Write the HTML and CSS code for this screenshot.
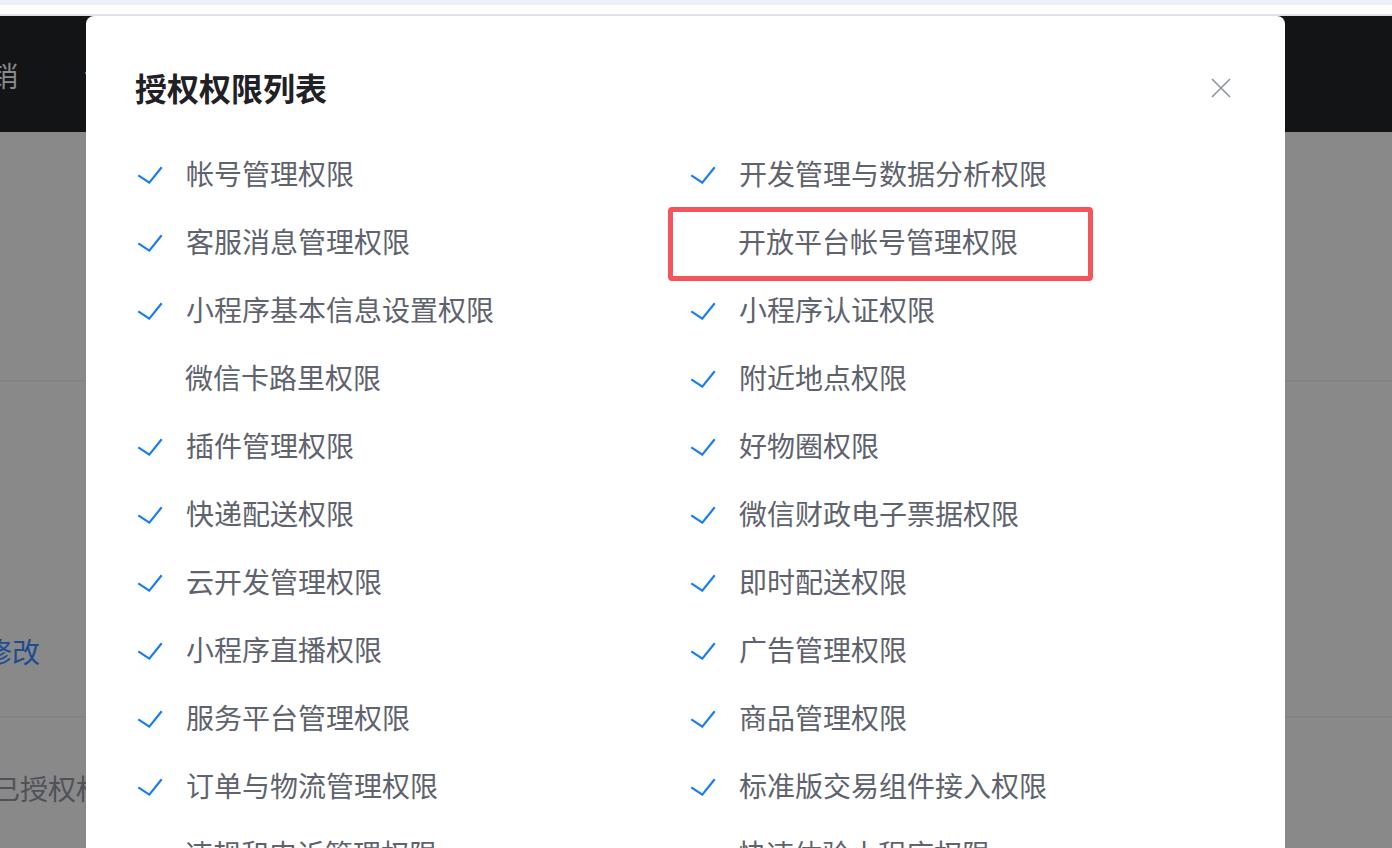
FILE: index.html
```html
<!DOCTYPE html>
<html lang="zh-CN">
<head>
<meta charset="utf-8">
<title>授权权限列表</title>
<link rel="stylesheet" href="styles.css">
</head>
<body>
<div class="page">
  <div class="topstrip"></div>
  <div class="topwhite"></div>
  <header class="navbar">
    <span class="nav-item">营销</span>
    <span class="nav-item">设置</span>
  </header>
  <section class="bg-content">
    <div class="bg-row bg-row-a"></div>
    <div class="bg-row bg-row-b"><span class="bg-link">修改</span></div>
    <div class="bg-row bg-row-c"><span class="bg-label">已授权权限</span></div>
  </section>

  <div class="modal">
    <div class="modal-head">
      <h2 class="modal-title">授权权限列表</h2>
      <button class="modal-close" aria-label="关闭">
        <svg width="22" height="22" viewBox="0 0 22 22"><path d="M2 2 L20 20 M20 2 L2 20" stroke="#8f949c" stroke-width="1.6" fill="none"/></svg>
      </button>
    </div>
    <ul class="perm-list">
      <li class="perm on"><span class="chk"></span>帐号管理权限</li>
      <li class="perm on"><span class="chk"></span>开发管理与数据分析权限</li>
      <li class="perm on"><span class="chk"></span>客服消息管理权限</li>
      <li class="perm off"><span class="chk"></span>开放平台帐号管理权限<span class="mark"></span></li>
      <li class="perm on"><span class="chk"></span>小程序基本信息设置权限</li>
      <li class="perm on"><span class="chk"></span>小程序认证权限</li>
      <li class="perm off"><span class="chk"></span>微信卡路里权限</li>
      <li class="perm on"><span class="chk"></span>附近地点权限</li>
      <li class="perm on"><span class="chk"></span>插件管理权限</li>
      <li class="perm on"><span class="chk"></span>好物圈权限</li>
      <li class="perm on"><span class="chk"></span>快递配送权限</li>
      <li class="perm on"><span class="chk"></span>微信财政电子票据权限</li>
      <li class="perm on"><span class="chk"></span>云开发管理权限</li>
      <li class="perm on"><span class="chk"></span>即时配送权限</li>
      <li class="perm on"><span class="chk"></span>小程序直播权限</li>
      <li class="perm on"><span class="chk"></span>广告管理权限</li>
      <li class="perm on"><span class="chk"></span>服务平台管理权限</li>
      <li class="perm on"><span class="chk"></span>商品管理权限</li>
      <li class="perm on"><span class="chk"></span>订单与物流管理权限</li>
      <li class="perm on"><span class="chk"></span>标准版交易组件接入权限</li>
      <li class="perm off"><span class="chk"></span>违规和申诉管理权限</li>
      <li class="perm off"><span class="chk"></span>快速体验小程序权限</li>
    </ul>
  </div>
</div>
</body>
</html>
```

FILE: styles.css
```css
html, body {
  margin: 0;
  padding: 0;
  width: 1392px;
  height: 848px;
  overflow: hidden;
  font-family: "Noto Sans CJK SC", "Noto Sans", sans-serif;
}

.page {
  position: relative;
  width: 1392px;
  height: 848px;
  background: #898989;
  overflow: hidden;
}

.topstrip {
  height: 5px;
  background: #eef1f8;
}

.topwhite {
  height: 9px;
  background: #ffffff;
  border-bottom: 2px solid #e2e2e2;
}

.navbar {
  height: 116px;
  background: #131416;
  display: flex;
  align-items: center;
  margin-left: -38px;
  gap: 66px;
}

.nav-item {
  font-size: 28px;
  color: #8a8b8e;
  line-height: 40px;
  margin-top: 2px;
}

.bg-content {
  display: flex;
  flex-direction: column;
}

.bg-row-a {
  height: 248px;
  border-bottom: 2px solid #838383;
}

.bg-row-b {
  height: 334px;
  border-bottom: 2px solid #838383;
  display: flex;
  align-items: flex-end;
  margin-left: -16px;
}

.bg-link {
  font-size: 28px;
  color: #1d4c92;
  line-height: 40px;
  margin-bottom: 45px;
}

.bg-row-c {
  height: 130px;
  margin-left: -8px;
}

.bg-label {
  display: block;
  font-size: 28px;
  color: #505257;
  line-height: 40px;
  margin-top: 50px;
}

.modal {
  position: absolute;
  left: 86px;
  top: 16px;
  width: 1199px;
  height: 900px;
  background: #ffffff;
  border-radius: 8px 8px 0 0;
  box-sizing: border-box;
  padding: 51px 49px 0 49px;
}

.modal-head {
  display: flex;
  align-items: center;
  justify-content: space-between;
  height: 40px;
  margin-bottom: 32px;
}

.modal-title {
  margin: 0;
  font-size: 32px;
  font-weight: 700;
  color: #1f2125;
  line-height: 40px;
}

.modal-close {
  border: 0;
  background: transparent;
  padding: 0;
  width: 22px;
  height: 22px;
  margin-right: 4px;
  margin-top: 2px;
  display: flex;
}

.perm-list {
  list-style: none;
  margin: 0;
  padding: 0;
  display: grid;
  grid-template-columns: 553px 1fr;
}

.perm {
  position: relative;
  height: 68px;
  display: flex;
  align-items: center;
  font-size: 28px;
  color: #5e636d;
  line-height: 40px;
}

.chk {
  width: 26px;
  height: 18px;
  margin-left: 2px;
  margin-right: 23px;
  margin-top: 4px;
  flex: none;
}

.perm.on .chk {
  background: no-repeat center / 26px 18px url("data:image/svg+xml;utf8,<svg xmlns='http://www.w3.org/2000/svg' width='26' height='18' viewBox='0 0 26 18'><polyline points='1.3,9.3 12.3,16.6 24.7,1.3' fill='none' stroke='%231a7cf2' stroke-width='2.2' stroke-linejoin='miter'/></svg>");
}

.perm.off .chk {
  margin-left: 0;
  margin-right: 24px;
}

.mark {
  position: absolute;
  left: -20px;
  top: 0px;
  width: 425px;
  height: 74px;
  box-sizing: border-box;
  border: 5px solid #f5545a;
  border-radius: 4px;
}
```
